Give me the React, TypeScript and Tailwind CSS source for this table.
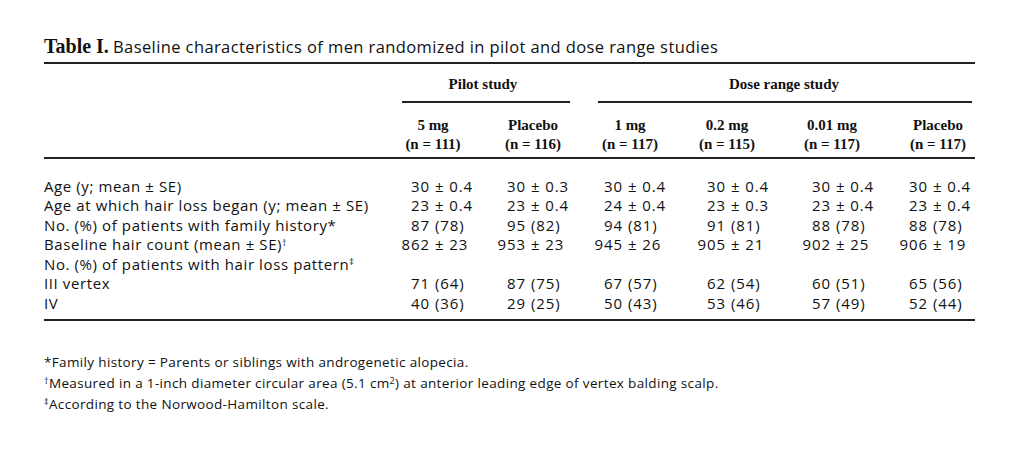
import * as React from "react";

const sans = "font-['Open_Sans',sans-serif]";
const serif = "font-['Liberation_Serif',serif]";

const cols = [
  { dose: "5 mg", n: "(n = 111)", anchor: "w-[42px]" },
  { dose: "Placebo", n: "(n = 116)", anchor: "w-[38px]" },
  { dose: "1 mg", n: "(n = 117)", anchor: "w-[38px]" },
  { dose: "0.2 mg", n: "(n = 115)", anchor: "w-[44px]" },
  { dose: "0.01 mg", n: "(n = 117)", anchor: "w-[44px]" },
  { dose: "Placebo", n: "(n = 117)", anchor: "w-[35px]" },
];

const rows: { label: React.ReactNode; values: string[] }[] = [
  { label: "Age (y; mean ± SE)", values: ["30 ± 0.4", "30 ± 0.3", "30 ± 0.4", "30 ± 0.4", "30 ± 0.4", "30 ± 0.4"] },
  { label: "Age at which hair loss began (y; mean ± SE)", values: ["23 ± 0.4", "23 ± 0.4", "24 ± 0.4", "23 ± 0.3", "23 ± 0.4", "23 ± 0.4"] },
  { label: "No. (%) of patients with family history*", values: ["87 (78)", "95 (82)", "94 (81)", "91 (81)", "88 (78)", "88 (78)"] },
  {
    label: (
      <>
        Baseline hair count (mean ± SE)<sup className="text-[9px]">†</sup>
      </>
    ),
    values: ["862 ± 23", "953 ± 23", "945 ± 26", "905 ± 21", "902 ± 25", "906 ± 19"],
  },
  {
    label: (
      <>
        No. (%) of patients with hair loss pattern<sup className="text-[9px]">‡</sup>
      </>
    ),
    values: [],
  },
  { label: "III vertex", values: ["71 (64)", "87 (75)", "67 (57)", "62 (54)", "60 (51)", "65 (56)"] },
  { label: "IV", values: ["40 (36)", "29 (25)", "50 (43)", "53 (46)", "57 (49)", "52 (44)"] },
];

const grid = "grid grid-cols-[344px_100px_97px_97px_105px_106px_90px]";

function Value({ text, anchor }: { text: string; anchor: string }) {
  const i = text.indexOf(" ");
  return (
    <div className="flex w-[90px] tracking-[0.9px]">
      <span className={`${anchor} text-right shrink-0`}>{text.slice(0, i)}</span>
      <span className="pl-[5px] whitespace-nowrap">{text.slice(i + 1)}</span>
    </div>
  );
}

export default function App() {
  return (
    <div className="min-h-[474px] w-[1027px] bg-white text-[#111] pl-[44px] pt-[36px]">
      <div className="w-[931px]">
        <div className="h-[20px] leading-[20px] whitespace-nowrap">
          <span className={`${serif} font-bold text-[20px]`}>Table I.</span>{" "}
          <span className={`${sans} text-[16.5px] tracking-[0.4px]`}>
            Baseline characteristics of men randomized in pilot and dose range studies
          </span>
        </div>
        <div className="mt-[6px] h-[2px] bg-[#222]" />

        <div className={`${grid} ${serif} font-bold text-[15px] mt-[10px] leading-[20px]`}>
          <div />
          <div className="col-span-2 w-[190px] text-center">Pilot study</div>
          <div className="col-span-4 w-[398px] text-center">Dose range study</div>
        </div>
        <div className={`${grid} mt-[7px]`}>
          <div />
          <div className="col-span-2 w-[190px] pl-[14px] pr-[8px]">
            <div className="h-[1.5px] bg-[#222]" />
          </div>
          <div className="col-span-4 w-[387px] pl-[13px]">
            <div className="h-[1.5px] bg-[#222]" />
          </div>
        </div>

        <div className={`${grid} ${serif} font-bold text-[15px] mt-[13px] leading-[19px]`}>
          <div />
          {cols.map((c, i) => (
            <div key={i} className="w-[90px] text-center whitespace-nowrap">
              <div>{c.dose}</div>
              <div>{c.n}</div>
            </div>
          ))}
        </div>
        <div className="mt-[3px] h-[2px] bg-[#222]" />

        <div className={`${sans} text-[15px] tracking-[0.6px] leading-[19.5px] mt-[18px]`}>
          {rows.map((r, ri) => (
            <div key={ri} className={`${grid} h-[19.5px]`}>
              <div className="whitespace-nowrap">{r.label}</div>
              {r.values.map((v, vi) => (
                <Value key={vi} text={v} anchor={cols[vi].anchor} />
              ))}
            </div>
          ))}
        </div>
        <div className="mt-[6px] h-[2px] bg-[#222]" />

        <div className={`${sans} text-[13.5px] tracking-[0.35px] leading-[21px] mt-[31px]`}>
          <p>*Family history = Parents or siblings with androgenetic alopecia.</p>
          <p>
            <sup className="text-[9px]">†</sup>Measured in a 1-inch diameter circular area (5.1 cm
            <sup className="text-[9px]">2</sup>) at anterior leading edge of vertex balding scalp.
          </p>
          <p>
            <sup className="text-[9px]">‡</sup>According to the Norwood-Hamilton scale.
          </p>
        </div>
      </div>
    </div>
  );
}
